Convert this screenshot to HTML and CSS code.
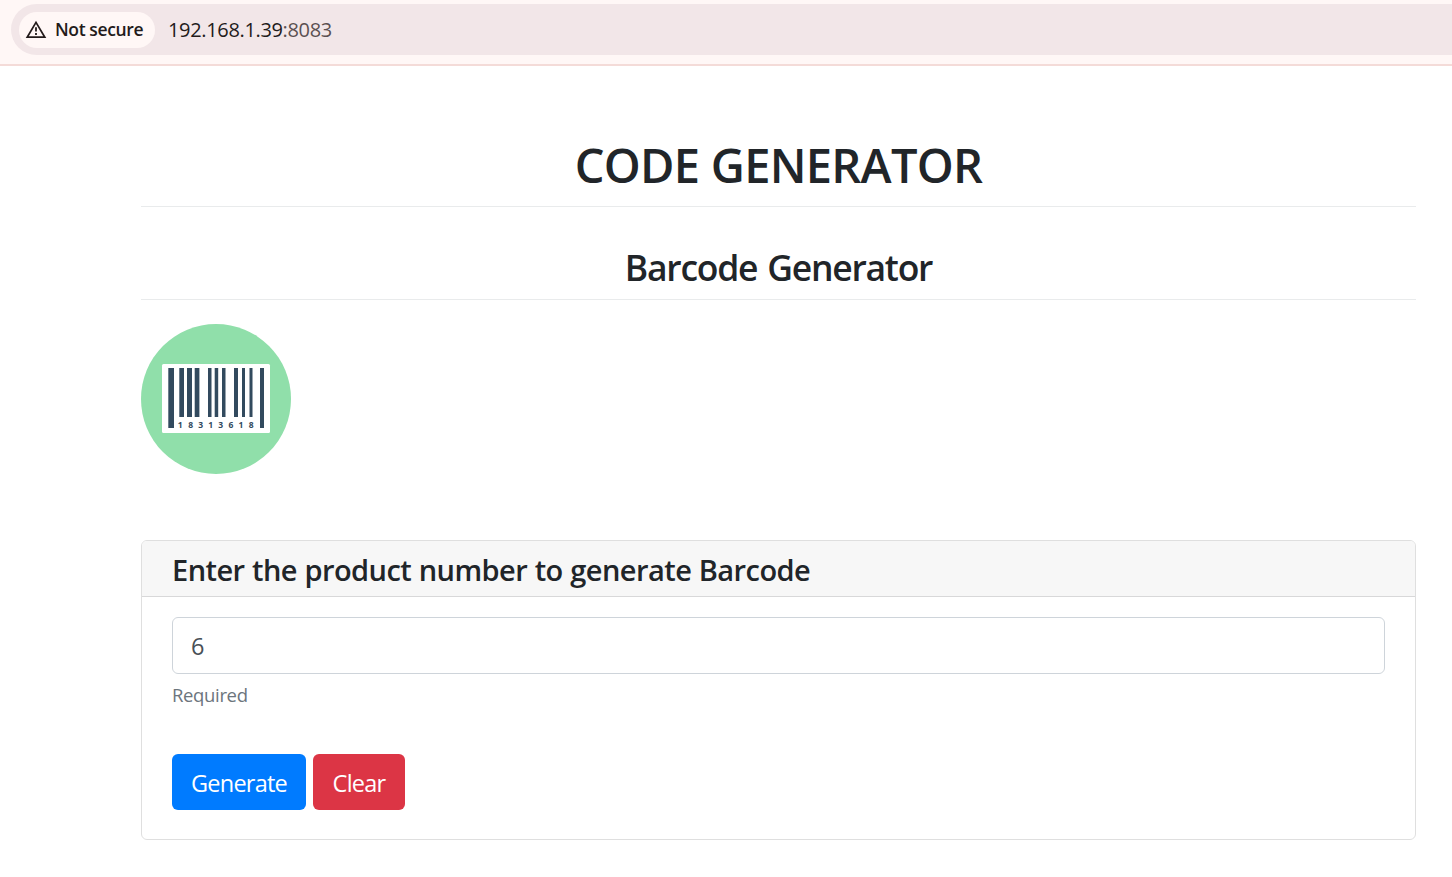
FILE: index.html
```html
<!DOCTYPE html>
<html lang="en">
<head>
<meta charset="utf-8">
<title>Code Generator</title>
<link rel="stylesheet" href="styles.css">
</head>
<body>
<header class="toolbar">
  <div class="address">
    <span class="security">
      <svg class="warning" width="22" height="19" viewBox="0 0 22 19"><path d="M11 2.400 19.800 17.200H2.200Z" fill="none" stroke="#231b1b" stroke-width="1.700"/><path d="M11 7.200v4.400M11 13v2" stroke="#231b1b" stroke-width="1.800"/></svg>
      <span class="security-text">Not secure</span>
    </span>
    <span class="url">192.168.1.39<span class="port">:8083</span></span>
  </div>
</header>
<main class="page">
  <h1 class="title">CODE GENERATOR</h1>
  <h2 class="subtitle">Barcode Generator</h2>
  <svg class="logo" width="150" height="150" viewBox="0 0 150 150">
    <circle cx="75" cy="75" r="75" fill="#90dfaa"/>
    <rect x="21" y="40" width="108" height="69" rx="1.500" fill="#fff"/>
    <g fill="#324a5e">
      <path d="M27.300 44H33v60h-5.700zM119 44h4v60h-4z"/>
      <path d="M38.300 44H43v49h-4.700zM46 44h5v49h-5zM53.700 44h4.700v49h-4.700zM67 44h3.500v49H67zM73.700 44h3.500v49h-3.500zM81 44h3.500v49H81zM93 44h4v49h-4zM101 44h3v49h-3zM108.500 44h3v49h-3z"/>
      <text class="digits" y="104" x="39.200 49.700 59.700 69.600 79.700 90 99.900 110.300">18313618</text>
    </g>
  </svg>
  <section class="card">
    <h3 class="card-header">Enter the product number to generate Barcode</h3>
    <form class="card-body">
      <input class="field" type="text" value="6" aria-label="Product number">
      <small class="hint">Required</small>
      <div class="actions">
        <button class="btn generate" type="button">Generate</button>
        <button class="btn clear" type="button">Clear</button>
      </div>
    </form>
  </section>
</main>
</body>
</html>
```
FILE: styles.css
```css
* { box-sizing: border-box; }
body {
  margin: 0;
  background: #fff;
  color: #212529;
  font-family: "Segoe UI", "Open Sans", "Noto Sans", sans-serif;
  overflow: hidden;
}
.toolbar {
  height: 66px;
  padding: 4px 0 0 11px;
  background: #fff7f6;
  border-bottom: 2px solid #f4dbd8;
}
.address {
  display: flex;
  align-items: center;
  height: 51px;
  padding-left: 8px;
  background: #f2e6e8;
  border-radius: 26px 0 0 26px;
}
.security {
  display: flex;
  align-items: center;
  width: 136px;
  height: 36px;
  padding: 0 0 1px 6px;
  background: #fff7f6;
  border-radius: 18px;
  font-size: 17.5px;
  font-weight: 600;
  letter-spacing: -0.38px;
  color: #231b1b;
  white-space: nowrap;
}
.warning { flex: none; margin-right: 8px; }
.url { margin-left: 13px; font-size: 20px; letter-spacing: -0.34px; color: #231b1b; white-space: nowrap; }
.port { color: #5b5051; }
.page { padding: 72px 36px 0 141px; }
h1, h2, h3 { margin: 0; font-weight: 600; white-space: nowrap; }
.title {
  height: 69px;
  border-bottom: 1px solid #e9ebec;
  font-size: 47px;
  line-height: 55px;
  letter-spacing: -0.72px;
  text-align: center;
}
.subtitle {
  height: 93px;
  padding-top: 39px;
  border-bottom: 1px solid #e9ebec;
  font-size: 35.500px;
  line-height: 43px;
  letter-spacing: -1.250px;
  word-spacing: 2px;
  text-align: center;
}
.logo { display: block; margin-top: 24px; }
.digits { font: 700 8.500px "Open Sans", sans-serif; text-anchor: middle; }
.card {
  height: 300px;
  margin-top: 66px;
  border: 1px solid #dfdfdf;
  border-radius: 6px;
  overflow: hidden;
}
.card-header {
  height: 56px;
  padding-left: 30px;
  background: #f7f7f7;
  border-bottom: 1px solid #d8d8d9;
  font-size: 29px;
  line-height: 58px;
  letter-spacing: -0.550px;
  word-spacing: 0.500px;
}
.card-body { padding: 20px 30px 0; }
.field {
  display: block;
  width: 100%;
  height: 57px;
  padding: 1px 18px 0;
  border: 1px solid #ced4da;
  border-radius: 6px;
  background: #fff;
  color: #495057;
  font: 23.500px "Segoe UI", "Open Sans", sans-serif;
}
.hint {
  display: block;
  height: 30px;
  margin-top: 6px;
  font-size: 18.500px;
  line-height: 30px;
  letter-spacing: -0.350px;
  color: #6c757d;
}
.actions { display: flex; gap: 7px; margin-top: 44px; }
.btn {
  height: 56px;
  padding: 2px 0 0;
  border: 0;
  border-radius: 6px;
  color: #fff;
  font: 23.500px "Segoe UI", "Open Sans", sans-serif;
  letter-spacing: -0.750px;
}
.generate { width: 134px; background: #007bff; }
.clear { width: 92px; background: #dc3545; }
```
